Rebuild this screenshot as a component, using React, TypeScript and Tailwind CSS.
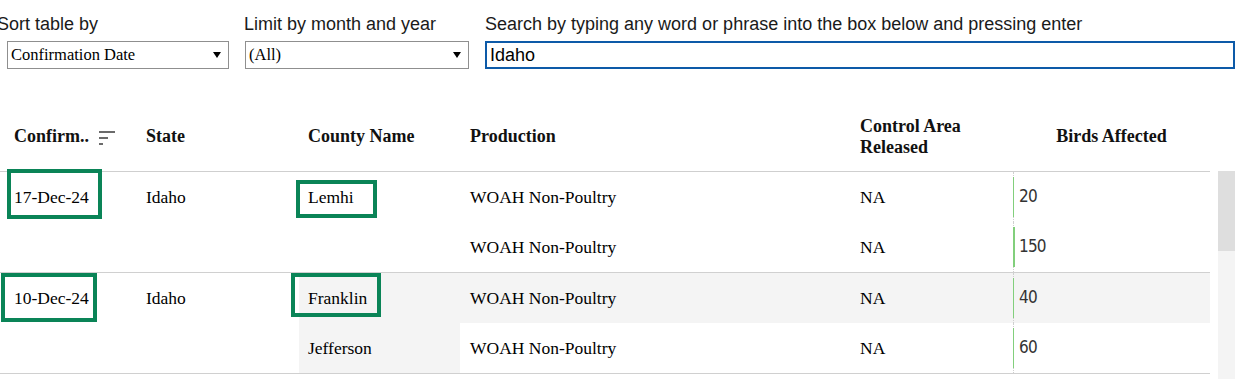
import React from "react";

const cols = "grid grid-cols-[132px_167px_161px_386px_167px_197px]";
const serif = "font-['Liberation_Serif','Times_New_Roman',serif]";
const sans = "font-['Liberation_Sans',Arial,sans-serif]";

type Row = {
  date?: string;
  state?: string;
  county: string;
  production: string;
  released: string;
  birds: number;
  shaded: "none" | "county" | "row";
  dateBox?: string;
  countyBox?: string;
};

const groups: Row[][] = [
  [
    {
      date: "17-Dec-24",
      state: "Idaho",
      county: "Lemhi",
      production: "WOAH Non-Poultry",
      released: "NA",
      birds: 20,
      shaded: "none",
      dateBox: "left-[7px] top-[-3px] w-[95px] h-[50px]",
      countyBox: "left-[-3px] top-[8px] w-[81px] h-[38px]",
    },
    { county: "", production: "WOAH Non-Poultry", released: "NA", birds: 150, shaded: "none" },
  ],
  [
    {
      date: "10-Dec-24",
      state: "Idaho",
      county: "Franklin",
      production: "WOAH Non-Poultry",
      released: "NA",
      birds: 40,
      shaded: "row",
      dateBox: "left-[1px] top-0 w-[96px] h-[49px]",
      countyBox: "left-[-8px] top-0 w-[90px] h-[44px]",
    },
    { county: "Jefferson", production: "WOAH Non-Poultry", released: "NA", birds: 60, shaded: "county" },
  ],
];

function Select({ value }: { value: string }) {
  return (
    <div className="flex h-[28px] items-center justify-between border border-[#8f8f8f] bg-white pl-[3px] pr-[7px]">
      <span className={`${serif} text-[16.5px] leading-[18px] text-black`}>{value}</span>
      <span className="h-0 w-0 border-x-[4.5px] border-t-[6px] border-x-transparent border-t-black" />
    </div>
  );
}

function Highlight({ pos }: { pos: string }) {
  return <span className={`pointer-events-none absolute border-[4px] border-[#0a8457] ${pos}`} />;
}

function SortIcon() {
  return (
    <span className="ml-[10px] flex flex-col gap-[4px] pt-[2px]">
      <span className="h-[2px] w-[16px] bg-[#6b6b6b]" />
      <span className="h-[2px] w-[9px] bg-[#6b6b6b]" />
      <span className="h-[2px] w-[4px] bg-[#6b6b6b]" />
    </span>
  );
}

export default function App() {
  return (
    <div className="relative h-[379px] w-[1238px] overflow-hidden bg-white">
      {/* filter controls */}
      <div className={`${sans} flex h-[102px] gap-4 pl-[7px] pt-[14px] text-[18px] leading-[20px] text-[#1a1a1a]`}>
        <div className="w-[222px]">
          <div className="-ml-[10px] mb-[7px] whitespace-nowrap">Sort table by</div>
          <Select value="Confirmation Date" />
        </div>
        <div className="w-[224px]">
          <div className="-ml-px mb-[7px] whitespace-nowrap">Limit by month and year</div>
          <Select value="(All)" />
        </div>
        <div className="w-[750px]">
          <div className="mb-[7px] whitespace-nowrap">Search by typing any word or phrase into the box below and pressing enter</div>
          <div className="flex h-[28px] items-center border-2 border-[#0d5aa8] pl-[3px] text-black">Idaho</div>
        </div>
      </div>

      <div className="flex">
        <div className="w-[1210px]">
          {/* header */}
          <div className={`${cols} ${serif} h-[70px] border-b border-[#cfcfcf] text-[18px] font-bold leading-[21px] text-[#111]`}>
            <div className="flex items-center pl-[14px]">
              Confirm..
              <SortIcon />
            </div>
            <div className="flex items-center pl-[14px]">State</div>
            <div className="flex items-center pl-[9px]">County Name</div>
            <div className="flex items-center pl-[10px]">Production</div>
            <div className="flex items-center pl-[14px]">
              Control Area
              <br />
              Released
            </div>
            <div className="flex items-center justify-center">Birds Affected</div>
          </div>

          {/* body */}
          {groups.map((g, gi) => (
            <div key={gi} className="border-b border-[#d0d0d0]">
              {g.map((r, ri) => {
                const rowBg = r.shaded === "row" ? "bg-[#f4f4f4]" : "";
                return (
                  <div key={ri} className={`${cols} ${serif} h-[50px] text-[17.5px] text-black`}>
                    <div className="relative flex items-center pl-[14px]">
                      {r.date}
                      {r.dateBox && <Highlight pos={r.dateBox} />}
                    </div>
                    <div className="flex items-center pl-[14px]">{r.state}</div>
                    <div className={`relative flex items-center pl-[9px] ${r.shaded !== "none" ? "bg-[#f4f4f4]" : ""}`}>
                      {r.county}
                      {r.countyBox && <Highlight pos={r.countyBox} />}
                    </div>
                    <div className={`flex items-center pl-[10px] ${rowBg}`}>{r.production}</div>
                    <div className={`flex items-center pl-[14px] ${rowBg}`}>{r.released}</div>
                    <div className={`relative flex items-center border-l border-dotted border-[#cfcfcf] pl-[5px] ${rowBg}`}>
                      <span
                        className="absolute -left-px top-[5px] bottom-[5px] bg-[#82cf7c]"
                        style={{ width: r.birds >= 100 ? 2 : 1 }}
                      />
                      <span className="font-['DejaVu_Sans_Condensed','Liberation_Sans',Arial,sans-serif] text-[17px] tracking-[-0.8px] text-[#333]">
                        {r.birds}
                      </span>
                    </div>
                  </div>
                );
              })}
            </div>
          ))}
        </div>

        {/* scrollbar */}
        <div className="ml-[8px] mt-[69px] flex h-[208px] w-[17px] flex-col bg-[#f4f4f4]">
          <div className="h-[80px] bg-[#dedede]" />
        </div>
      </div>
    </div>
  );
}
